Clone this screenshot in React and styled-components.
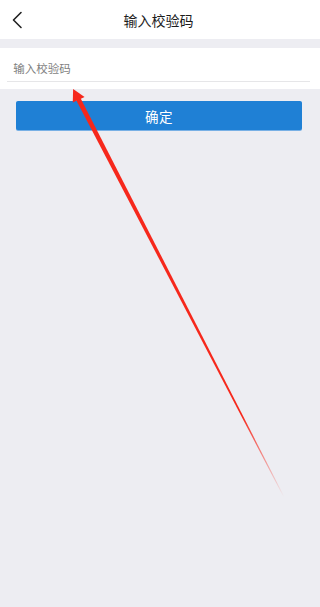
import React from "react";
import styled, { createGlobalStyle } from "styled-components";

const Global = createGlobalStyle`
  html, body { margin: 0; padding: 0; }
  body {
    background: #ededf2;
    font-family: "Noto Sans CJK SC", "Noto Sans", sans-serif;
  }
  * { box-sizing: border-box; }
`;

const Page = styled.div`
  position: relative;
  min-height: 607px;
  background: #ededf2;
  overflow: hidden;
`;

const Header = styled.header`
  position: relative;
  height: 39px;
  background: #ffffff;
  display: flex;
  align-items: center;
  justify-content: center;
`;

const BackButton = styled.button`
  position: absolute;
  left: 2%;
  top: 8px;
  width: 22px;
  height: 24px;
  padding: 0;
  border: 0;
  background: transparent;
  display: flex;
  align-items: center;
  justify-content: center;
`;

const Title = styled.h1`
  margin: 0 1% 0 0;
  font-size: 14px;
  font-weight: 400;
  color: #1c1c1c;
`;

const InputSection = styled.section`
  margin-top: 9px;
  height: 41px;
  background: #ffffff;
  padding: 0 3% 0 2.3%;
`;

const Field = styled.input`
  display: block;
  width: 100%;
  height: 34px;
  border: 0;
  border-bottom: 1px solid #e6e6e8;
  outline: none;
  background: transparent;
  padding: 6px 0 0 6px;
  font-family: "Noto Sans CJK SC", "Noto Sans", sans-serif;
  font-size: 11.5px;
  color: #333;
  &::placeholder { color: #7f7f7f; }
`;

const Actions = styled.div`
  padding: 12px 5.6% 0 5%;
`;

const ConfirmButton = styled.button`
  display: block;
  width: 100%;
  height: 29px;
  border: 0;
  border-radius: 2px;
  background: #1f80d5;
  box-shadow: 0 1px 0 rgba(90, 160, 225, 0.8);
  color: #ffffff;
  font-family: "Noto Sans CJK SC", "Noto Sans", sans-serif;
  font-size: 13.5px;
  letter-spacing: 0.5px;
  padding: 0;
`;

const ArrowLayer = styled.svg`
  position: absolute;
  left: 0;
  top: 0;
  width: 100%;
  height: 607px;
  pointer-events: none;
`;

function ChevronLeft() {
  return (
    <svg width="12" height="18" viewBox="0 0 12 18">
      <path d="M10 1.5 L2.5 9 L10 16.5" fill="none" stroke="#222" strokeWidth="1.6" strokeLinecap="round" strokeLinejoin="round" />
    </svg>
  );
}

function Arrow() {
  const tip = [69, 89];
  const tail = [268, 497];
  const dx = tail[0] - tip[0];
  const dy = tail[1] - tip[1];
  const len = Math.hypot(dx, dy);
  const ux = dx / len, uy = dy / len;
  const px = uy, py = -ux;
  const headLen = 12, headHalf = 6.2;
  const base = [tip[0] + ux * headLen, tip[1] + uy * headLen];
  const c1 = [base[0] + px * headHalf, base[1] + py * headHalf];
  const c2 = [base[0] - px * headHalf, base[1] - py * headHalf];
  const s0 = [tip[0] + ux * (headLen - 2), tip[1] + uy * (headLen - 2)];
  const w0 = 2.3, w1 = 0.4;
  const shaft = [
    [s0[0] + px * w0, s0[1] + py * w0],
    [tail[0] + px * w1, tail[1] + py * w1],
    [tail[0] - px * w1, tail[1] - py * w1],
    [s0[0] - px * w0, s0[1] - py * w0],
  ];
  const pts = (a) => a.map((p) => p.join(",")).join(" ");
  return (
    <ArrowLayer viewBox="0 0 302 607" preserveAspectRatio="none">
      <defs>
        <linearGradient id="fade" gradientUnits="userSpaceOnUse" x1={tip[0]} y1={tip[1]} x2={tail[0]} y2={tail[1]}>
          <stop offset="0" stopColor="#f6281c" stopOpacity="1" />
          <stop offset="0.8" stopColor="#f6281c" stopOpacity="1" />
          <stop offset="1" stopColor="#f6281c" stopOpacity="0" />
        </linearGradient>
      </defs>
      <polygon points={pts(shaft)} fill="url(#fade)" />
      <polygon points={pts([tip, c1, c2])} fill="#f6281c" />
    </ArrowLayer>
  );
}

export default function App() {
  return (
    <Page>
      <Global />
      <Header>
        <BackButton aria-label="返回">
          <ChevronLeft />
        </BackButton>
        <Title>输入校验码</Title>
      </Header>
      <InputSection>
        <Field placeholder="输入校验码" />
      </InputSection>
      <Actions>
        <ConfirmButton>确定</ConfirmButton>
      </Actions>
      <Arrow />
    </Page>
  );
}
